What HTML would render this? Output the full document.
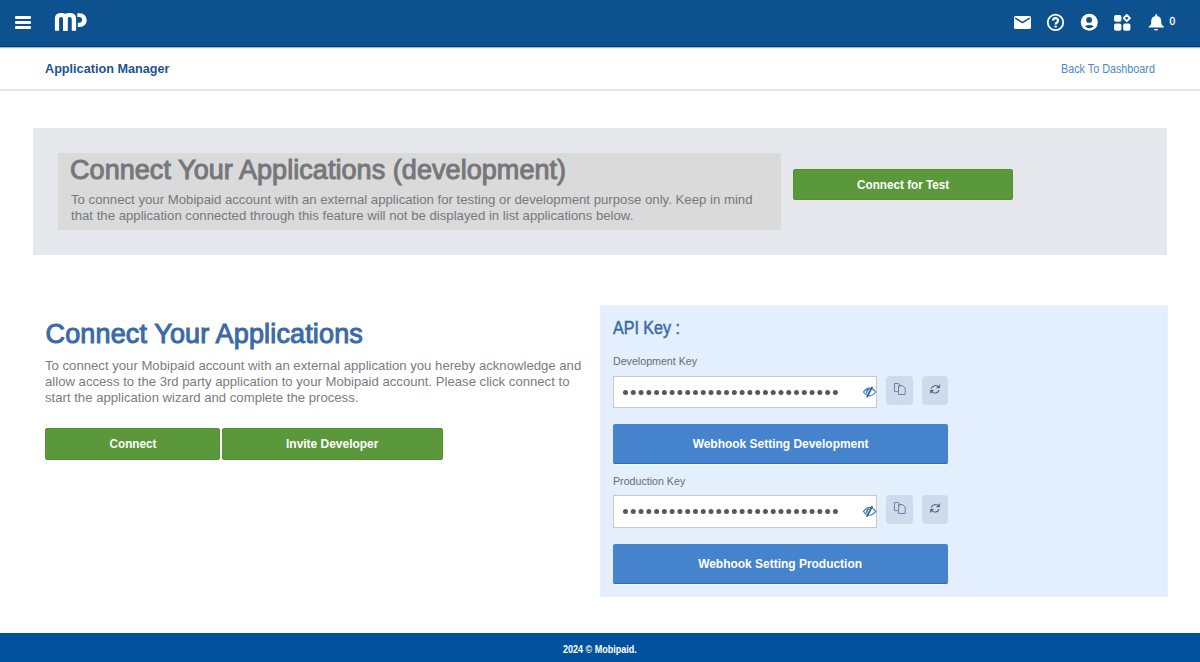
<!DOCTYPE html>
<html><head><meta charset="utf-8">
<style>
*{margin:0;padding:0;box-sizing:border-box}
html,body{width:1200px;height:662px;overflow:hidden;background:#fff;font-family:"Liberation Sans",sans-serif}
.a{position:absolute}
.t{white-space:nowrap}
#hdr{left:0;top:0;width:1200px;height:47px;background:#0d518e;border-bottom:1px solid #003f86;box-shadow:0 1px 1px rgba(0,50,120,0.35)}
#subline{left:0;top:89px;width:1200px;height:2px;background:#e6e6e6}
#appm{left:45px;top:61px;font-size:13.5px;line-height:16px;font-weight:bold;color:#1b5493;transform:scaleX(0.937);transform-origin:0 0}
#back{left:1061px;top:61px;font-size:12.4px;line-height:16px;color:#4a88cf;transform:scaleX(0.87);transform-origin:0 0}
#p1{left:33px;top:128px;width:1134px;height:127px;background:#e6e7ec}
#p1in{left:58px;top:153px;width:723px;height:77px;background:#dadada}
#h1{left:70px;top:155px;font-size:27px;line-height:30px;letter-spacing:0.06px;color:#76777b;-webkit-text-stroke:1px #76777b}
#pp1{left:71px;top:192px;font-size:13.2px;line-height:16.2px;color:#77787c}
.btn{display:flex;align-items:center;justify-content:center;color:#fff;border-radius:2px}
.btn span{display:block;font-weight:bold;white-space:nowrap}
.g{background:#5a983b;border:1px solid #53922f}
#bt1{left:793px;top:169px;width:220px;height:31px}
#bt1 span{font-size:13px;transform:scaleX(0.9)}
#h2{left:45.5px;top:319px;font-size:27px;line-height:30px;color:#3b6aa6;-webkit-text-stroke:1px #3b6aa6;letter-spacing:0.15px}
#pp2{left:45px;top:358px;font-size:13.15px;line-height:16.1px;color:#7b7b80}
#bc{left:45px;top:428px;width:175px;height:32px}
#bc span{font-size:13px;transform:translateY(-1px) scaleX(0.9)}
#bi{left:221.5px;top:428px;width:221.5px;height:32px}
#bi span{font-size:13px;transform:translateY(-1px) scaleX(0.92)}
#api{left:600px;top:305px;width:568px;height:292px;background:#e3effc;border:1px solid #eaf3fd}
#apik{left:613px;top:316.6px;font-size:18px;line-height:22px;color:#3b6aa6;-webkit-text-stroke:0.5px #3b6aa6;transform:scaleX(0.893);transform-origin:0 0}
.lbl{font-size:11px;line-height:14px;color:#6b6b6f;transform:scaleX(0.968);transform-origin:0 0}
.inp{left:613px;width:264px;height:32px;background:#fff;border:1px solid #c9c9c9}
.sb{width:27px;height:29px;background:#cfdbec;border-radius:4px}
.wb{left:613px;width:335px;height:40px;background:#4583cc;border-bottom:1px solid #2f6cbd;box-shadow:0 1px 0 rgba(255,255,255,0.6)}
.wb span{font-size:13px;transform:scaleX(0.92)}
#ftr{left:0;top:633px;width:1200px;height:29px;background:#00529e}
#ftt{left:0;top:633px;width:1200px;height:29px;display:flex;align-items:center;justify-content:center;color:#fff}
#ftt span{font-weight:bold;font-size:10px;transform:translateY(1.5px) scaleX(0.9)}
svg{position:absolute;overflow:visible}
</style></head><body>
<div id="hdr" class="a"></div>
<svg width="1200" height="47" style="left:0;top:0">
 <g fill="#fff">
  <rect x="15" y="16" width="16" height="3" rx="1"/>
  <rect x="15" y="21" width="16" height="3" rx="1"/>
  <rect x="15" y="26" width="16" height="3" rx="1"/>
  <path d="M54.9,30.85 V18.3 Q54.9,13.1 61.25,13.1 Q67.6,13.1 67.6,18.3 V30.85 H63.06 V19 Q63.06,16.9 61.1,16.9 Q59.1,16.9 59.1,19 V30.85 Z"/>
  <path d="M63.06,30.85 V18.3 Q63.06,13.1 69.6,13.1 Q76.1,13.1 76.1,18.3 V30.85 H71.76 V19.1 Q71.76,17 69.7,17 Q67.6,17 67.6,19.1 V30.85 Z"/>
  <path fill-rule="evenodd" d="M77.3,13.2 H79.9 A6.9,6.95 0 0 1 79.9,27.1 H77.8 V22.7 H79.2 A2.9,2.9 0 0 0 79.2,16.9 H77.4 Z"/>
  <!-- mail -->
  <rect x="1014" y="16" width="17" height="13" rx="1.6"/>
  <!-- help -->
  <circle cx="1055.5" cy="22.4" r="7.7" fill="none" stroke="#fff" stroke-width="1.8"/>
  <!-- user -->
  <circle cx="1089.3" cy="22.2" r="8.5"/>
  <!-- widgets -->
  <rect x="1114.1" y="14.9" width="7.3" height="6.9" rx="1.8"/>
  <rect x="1114.1" y="23.4" width="7.3" height="7.4" rx="1.8"/>
  <rect x="1123.2" y="23.4" width="7.2" height="7.4" rx="1.8"/>
  <path d="M1126.8,15 L1129.9,18.1 L1126.8,21.2 L1123.7,18.1 Z" fill="none" stroke="#fff" stroke-width="1.9" stroke-linejoin="round"/>
  <!-- bell -->
  <path d="M1155.2,16 Q1155.2,14 1156.25,14 Q1157.3,14 1157.3,16 C1160,16.5 1161.3,18.7 1161.3,21.2 V23.6 Q1161.6,25.7 1163.9,26.6 V27.55 H1148.7 V26.6 Q1151,25.7 1151.2,23.6 V21.2 C1151.2,18.7 1152.5,16.5 1155.2,16 Z"/>
  <path d="M1154,28.9 H1158.2 Q1158.2,30.6 1156.1,30.6 Q1154,30.6 1154,28.9 Z"/>
 </g>
 <g fill="none" stroke="#0d518e" stroke-width="1.5" stroke-linecap="round" stroke-linejoin="round">
  <path d="M1015.8,18.4 L1022.5,22.6 L1029.2,18.4"/>
 </g>
 <g fill="#0d518e">
  <circle cx="1089.1" cy="19.9" r="2.9"/>
  <path d="M1084.8,26.2 Q1089.3,23.6 1093.9,26.2 Q1089.3,30.4 1084.8,26.2 Z"/>
 </g>
 <g fill="#fff">
  <path d="M1053.2,20.7 A2.4,2.4 0 1 1 1056.9,22.5 Q1055.6,23.3 1055.6,24.5" fill="none" stroke="#fff" stroke-width="2.2"/>
  <rect x="1054.45" y="25.4" width="2.3" height="2.2" rx="0.3"/>
 </g>
 <text x="1169.6" y="24.9" fill="#fff" font-family="Liberation Sans" font-size="10.2px" stroke="#fff" stroke-width="0.3">0</text>
</svg>

<div id="subline" class="a"></div>
<div id="appm" class="a t">Application Manager</div>
<div id="back" class="a t">Back To Dashboard</div>

<div id="p1" class="a"></div>
<div id="p1in" class="a"></div>
<div id="h1" class="a t">Connect Your Applications (development)</div>
<div id="pp1" class="a t">To connect your Mobipaid account with an external application for testing or development purpose only. Keep in mind<br>that the application connected through this feature will not be displayed in list applications below.</div>
<div id="bt1" class="a btn g"><span>Connect for Test</span></div>

<div id="h2" class="a t">Connect Your Applications</div>
<div id="pp2" class="a t">To connect your Mobipaid account with an external application you hereby acknowledge and<br>allow access to the 3rd party application to your Mobipaid account. Please click connect to<br>start the application wizard and complete the process.</div>
<div id="bc" class="a btn g"><span>Connect</span></div>
<div id="bi" class="a btn g"><span>Invite Developer</span></div>

<div id="api" class="a"></div>
<div id="apik" class="a t">API Key :</div>
<div class="a t lbl" style="left:613px;top:354px">Development Key</div>
<div class="a inp" style="top:376px"></div>
<div class="a sb" style="left:886px;top:376px"></div>
<div class="a sb" style="left:922px;top:376px;width:26px"></div>
<div class="a btn wb" style="top:424px"><span>Webhook Setting Development</span></div>
<div class="a t lbl" style="left:613px;top:474px">Production Key</div>
<div class="a inp" style="top:495px;height:33px"></div>
<div class="a sb" style="left:886px;top:495px"></div>
<div class="a sb" style="left:922px;top:495px;width:26px"></div>
<div class="a btn wb" style="top:544px"><span>Webhook Setting Production</span></div>

<svg id="icons" width="1200" height="662" style="left:0;top:0">
 <g fill="#58585c">
<circle cx="625.50" cy="392.5" r="2.5"/>
<circle cx="633.27" cy="392.5" r="2.5"/>
<circle cx="641.05" cy="392.5" r="2.5"/>
<circle cx="648.82" cy="392.5" r="2.5"/>
<circle cx="656.60" cy="392.5" r="2.5"/>
<circle cx="664.37" cy="392.5" r="2.5"/>
<circle cx="672.14" cy="392.5" r="2.5"/>
<circle cx="679.92" cy="392.5" r="2.5"/>
<circle cx="687.69" cy="392.5" r="2.5"/>
<circle cx="695.47" cy="392.5" r="2.5"/>
<circle cx="703.24" cy="392.5" r="2.5"/>
<circle cx="711.01" cy="392.5" r="2.5"/>
<circle cx="718.79" cy="392.5" r="2.5"/>
<circle cx="726.56" cy="392.5" r="2.5"/>
<circle cx="734.34" cy="392.5" r="2.5"/>
<circle cx="742.11" cy="392.5" r="2.5"/>
<circle cx="749.88" cy="392.5" r="2.5"/>
<circle cx="757.66" cy="392.5" r="2.5"/>
<circle cx="765.43" cy="392.5" r="2.5"/>
<circle cx="773.21" cy="392.5" r="2.5"/>
<circle cx="780.98" cy="392.5" r="2.5"/>
<circle cx="788.75" cy="392.5" r="2.5"/>
<circle cx="796.53" cy="392.5" r="2.5"/>
<circle cx="804.30" cy="392.5" r="2.5"/>
<circle cx="812.08" cy="392.5" r="2.5"/>
<circle cx="819.85" cy="392.5" r="2.5"/>
<circle cx="827.62" cy="392.5" r="2.5"/>
<circle cx="835.40" cy="392.5" r="2.5"/>
<circle cx="625.50" cy="511.5" r="2.5"/>
<circle cx="633.27" cy="511.5" r="2.5"/>
<circle cx="641.05" cy="511.5" r="2.5"/>
<circle cx="648.82" cy="511.5" r="2.5"/>
<circle cx="656.60" cy="511.5" r="2.5"/>
<circle cx="664.37" cy="511.5" r="2.5"/>
<circle cx="672.14" cy="511.5" r="2.5"/>
<circle cx="679.92" cy="511.5" r="2.5"/>
<circle cx="687.69" cy="511.5" r="2.5"/>
<circle cx="695.47" cy="511.5" r="2.5"/>
<circle cx="703.24" cy="511.5" r="2.5"/>
<circle cx="711.01" cy="511.5" r="2.5"/>
<circle cx="718.79" cy="511.5" r="2.5"/>
<circle cx="726.56" cy="511.5" r="2.5"/>
<circle cx="734.34" cy="511.5" r="2.5"/>
<circle cx="742.11" cy="511.5" r="2.5"/>
<circle cx="749.88" cy="511.5" r="2.5"/>
<circle cx="757.66" cy="511.5" r="2.5"/>
<circle cx="765.43" cy="511.5" r="2.5"/>
<circle cx="773.21" cy="511.5" r="2.5"/>
<circle cx="780.98" cy="511.5" r="2.5"/>
<circle cx="788.75" cy="511.5" r="2.5"/>
<circle cx="796.53" cy="511.5" r="2.5"/>
<circle cx="804.30" cy="511.5" r="2.5"/>
<circle cx="812.08" cy="511.5" r="2.5"/>
<circle cx="819.85" cy="511.5" r="2.5"/>
<circle cx="827.62" cy="511.5" r="2.5"/>
<circle cx="835.40" cy="511.5" r="2.5"/>
 </g>
 <g id="eye1">
  <path d="M863.4,392 Q869.5,384.2 875.8,392 Q869.5,399.8 863.4,392 Z" fill="none" stroke="#4275bb" stroke-width="1.1"/>
  <path d="M872,387.4 L867.2,396.6" stroke="#2f5fa8" stroke-width="1.8" stroke-linecap="round"/>
  <path d="M866.8,393.5 Q866.3,390 869.3,389.3" fill="none" stroke="#3d6fb5" stroke-width="1.4"/>
 </g>
 <g transform="translate(0,119.3)">
  <path d="M863.4,392 Q869.5,384.2 875.8,392 Q869.5,399.8 863.4,392 Z" fill="none" stroke="#4275bb" stroke-width="1.1"/>
  <path d="M872,387.4 L867.2,396.6" stroke="#2f5fa8" stroke-width="1.8" stroke-linecap="round"/>
  <path d="M866.8,393.5 Q866.3,390 869.3,389.3" fill="none" stroke="#3d6fb5" stroke-width="1.4"/>
 </g>
 <g id="copy1" fill="none" stroke="#63709a" stroke-width="0.85">
  <path d="M897.8,391.6 H894.5 V383.5 H898.4 L900.8,385.9 V385.6"/>
  <path d="M898.5,385.6 H902.6 L905.2,388.2 V394.5 H898.5 Z" fill="#cfdbec"/>
  <path d="M898.5,388 L900.9,385.6" stroke-width="0.7"/>
 </g>
 <g transform="translate(0,119)" fill="none" stroke="#63709a" stroke-width="0.85">
  <path d="M897.8,391.6 H894.5 V383.5 H898.4 L900.8,385.9 V385.6"/>
  <path d="M898.5,385.6 H902.6 L905.2,388.2 V394.5 H898.5 Z" fill="#cfdbec"/>
  <path d="M898.5,388 L900.9,385.6" stroke-width="0.7"/>
 </g>
 <g id="ref1" fill="none" stroke="#55607f" stroke-width="1.05">
  <path d="M931.2,388.6 A4.4,4.4 0 0 1 938.8,387.2"/>
  <path d="M939.1,390 A4.4,4.4 0 0 1 931.4,391.3"/>
  <path d="M939.8,384.4 V388 H936.3 Z" fill="#55607f" stroke-width="0.3"/>
  <path d="M930.3,393.7 V390.1 H933.8 Z" fill="#55607f" stroke-width="0.3"/>
 </g>
 <g transform="translate(0,119)" fill="none" stroke="#55607f" stroke-width="1.05">
  <path d="M931.2,388.6 A4.4,4.4 0 0 1 938.8,387.2"/>
  <path d="M939.1,390 A4.4,4.4 0 0 1 931.4,391.3"/>
  <path d="M939.8,384.4 V388 H936.3 Z" fill="#55607f" stroke-width="0.3"/>
  <path d="M930.3,393.7 V390.1 H933.8 Z" fill="#55607f" stroke-width="0.3"/>
 </g>
</svg>

<div id="ftr" class="a"></div>
<div id="ftt" class="a"><span>2024 © Mobipaid.</span></div>
</body></html>
